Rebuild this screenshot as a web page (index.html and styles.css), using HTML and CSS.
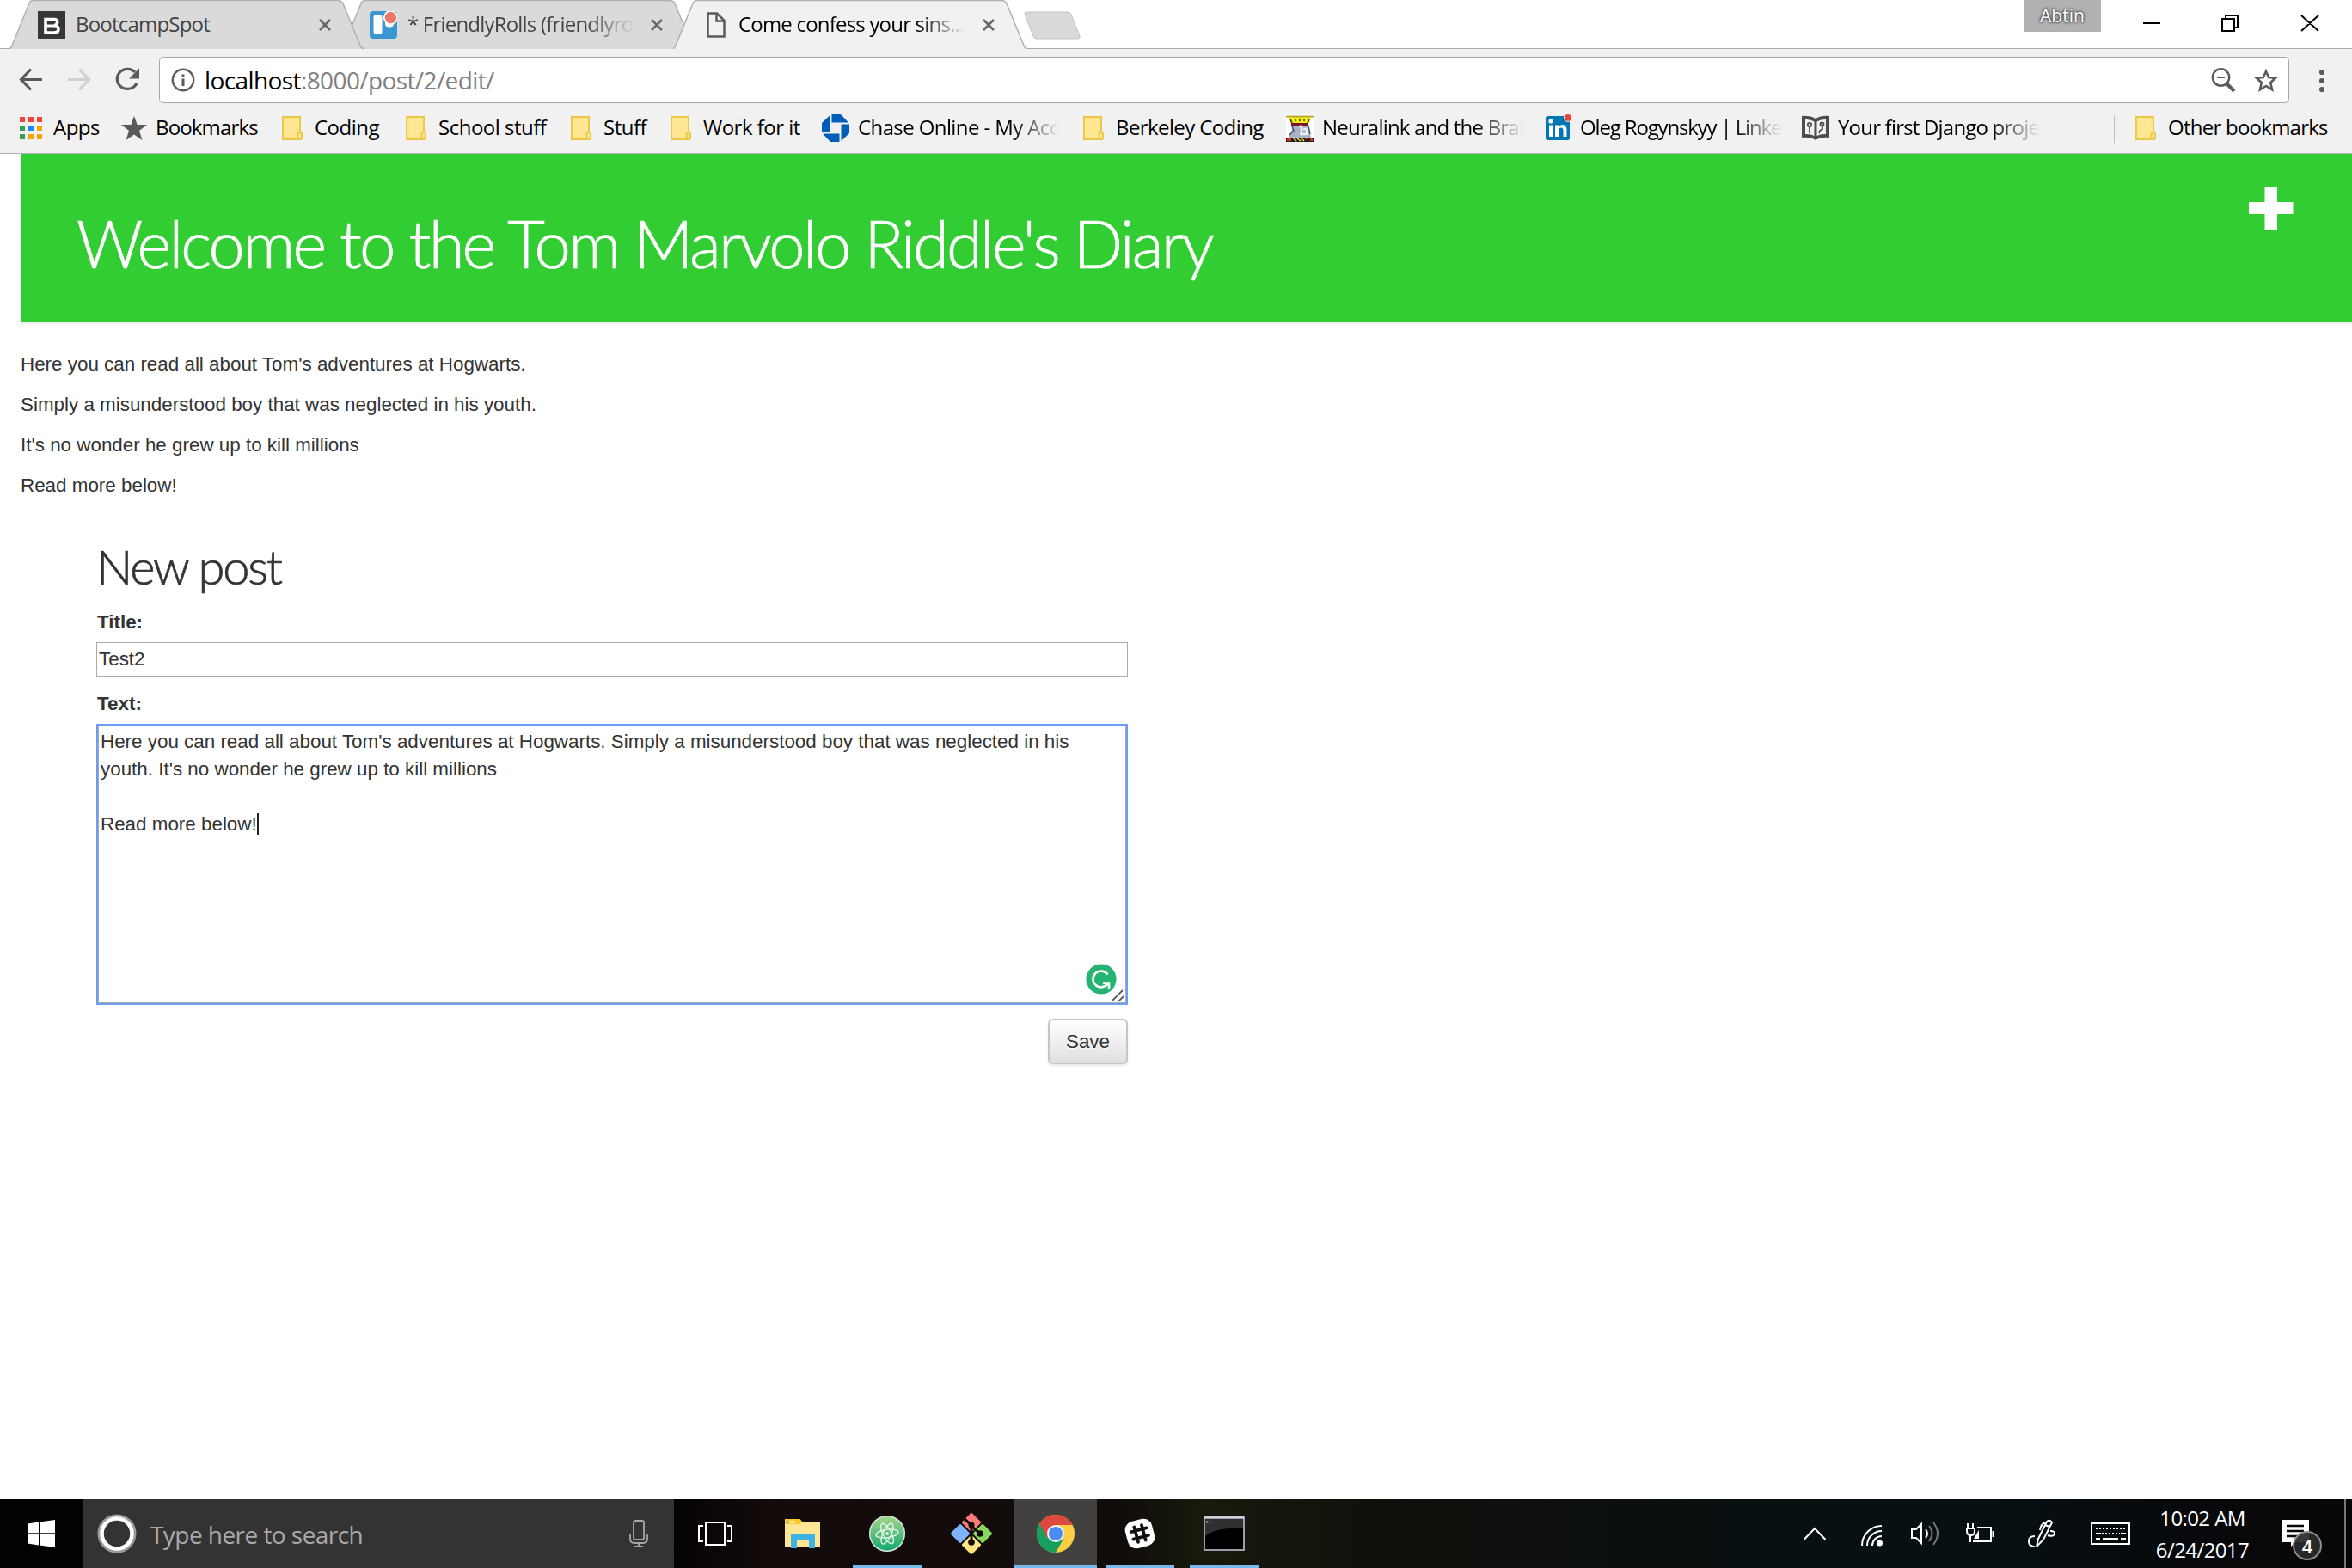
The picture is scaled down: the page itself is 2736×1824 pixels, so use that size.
FILE: index.html
```html
<!DOCTYPE html>
<html lang="en">
<head>
<meta charset="utf-8">
<title>Come confess your sins...</title>
<link rel="stylesheet" href="styles.css">
</head>
<body>
<svg width="0" height="0" class="defs">
  <symbol id="folder" viewBox="0 0 24 28"><path d="M1 1H21V27H1Z" fill="#ffe693" stroke="#ecc846" stroke-width="2"/><rect x="18.500" y="19" width="4.500" height="8" rx="1.500" fill="#ffe693" stroke="#ecc846" stroke-width="2"/></symbol>
  <symbol id="tabshape" viewBox="0 0 412 57"><path d="M0 56.500Q2 56 3 53L23 4Q24 .5 28 .5H382Q386 .5 388 4L408 53Q409 56 412 56.500V57H0Z"/><path class="edge" d="M0 56.500Q2 56 3 53L23 4Q24 .5 28 .5H382Q386 .5 388 4L408 53Q409 56 412 56.500" fill="none"/></symbol>
  <symbol id="cross" viewBox="0 0 14 14"><path d="M1 1L13 13M13 1L1 13" stroke-width="2.600" fill="none"/></symbol>
</svg>

<div class="tabstrip">
  <div class="tab t1"><svg class="shape"><use href="#tabshape"/></svg>
    <svg class="fav" viewBox="0 0 32 32"><rect width="32" height="32" fill="#373737"/><path d="M9 9.500H18.500Q22.700 9.500 22.700 13Q22.700 16 19 16.500Q24 17 24 21Q24 25 18.500 25H9Z" fill="none" stroke="#fff" stroke-width="3.600"/><path d="M9 17H20" stroke="#fff" stroke-width="3"/></svg>
    <span class="tabtitle">BootcampSpot</span><svg class="x"><use href="#cross"/></svg></div>
  <div class="tab t2"><svg class="shape"><use href="#tabshape"/></svg>
    <svg class="fav" viewBox="0 0 32 32"><rect width="32" height="32" rx="4" fill="#3b97d1"/><rect x="4.500" y="4.500" width="10" height="22" rx="2.500" fill="#fff"/><path d="M18 6H28V15Q28 18.500 23 18.500T18 15Z" fill="#fff"/><circle cx="24.500" cy="7.500" r="8.500" fill="#fff"/><circle cx="24.500" cy="7.500" r="6.700" fill="#f07868"/></svg>
    <span class="tabtitle fade">* FriendlyRolls (friendlyro</span><svg class="x"><use href="#cross"/></svg></div>
  <div class="tab t3"><svg class="shape"><use href="#tabshape"/></svg>
    <svg class="doc" viewBox="0 0 22 30"><path d="M1.500 1.500H12L20.500 10V28.500H1.500ZM11.500 2V10.500H20" fill="none" stroke="#5a5a5a" stroke-width="2.500"/></svg>
    <span class="tabtitle fade">Come confess your sins...</span><svg class="x"><use href="#cross"/></svg></div>
  <svg class="newtab" viewBox="0 0 68 34"><path d="M4 1H52Q55 1 56 4L66 29Q67 32 64 32H16Q13 32 12 29L2 4Q1 1 4 1Z" fill="#d9d9d9" stroke="#c4c4c4"/></svg>
  <div class="winbtns">
    <span class="user">Abtin</span>
    <svg viewBox="0 0 292 56" class="winicons"><g fill="none" stroke="#000" stroke-width="2"><path d="M49 27H69M141 22H155V36H141ZM145 22V18H159V32H155M233 18L253 36M253 18L233 36"/></g></svg>
  </div>
</div>

<div class="toolbar">
  <svg class="nav" viewBox="0 0 162 54"><g fill="none" stroke-width="3.200"><path d="M49 26.500H25M36 14.500L24.500 26.500L36 38.500" stroke="#5a5a5a"/><path d="M79 26.500H103M92 14.500L103.500 26.500L92 38.500" stroke="#d0d0d0"/><path d="M157 18A12 11.500 0 1 0 159 31" stroke="#5a5a5a"/></g><path d="M162 13.500V25.500H150Z" fill="#5a5a5a"/></svg>
  <div class="omnibox">
    <svg class="info" viewBox="0 0 28 28"><circle cx="14" cy="14" r="12.200" fill="none" stroke="#5a5a5a" stroke-width="2.400"/><path d="M14 12.500V21M14 7.500V10.300" stroke="#5a5a5a" stroke-width="3"/></svg>
    <span class="url">localhost<span class="path">:8000/post/2/edit/</span></span>
    <svg class="omniicons" viewBox="0 0 80 30"><g fill="none" stroke="#5a5a5a"><circle cx="12.500" cy="12" r="9.700" stroke-width="2.400"/><path d="M8 12H17" stroke-width="2"/><path d="M19 19L28 28" stroke-width="4"/><path d="M65 5L68.200 12L76 12.700L70.200 18L72 26.300L65 22L58 26.300L59.800 18L54 12.700L61.800 12Z" stroke-width="2.600"/></g></svg>
  </div>
  <svg class="dots" viewBox="0 0 8 28"><circle cx="4" cy="4" r="3.100"/><circle cx="4" cy="14" r="3.100"/><circle cx="4" cy="24" r="3.100"/></svg>
</div>

<div class="bookmarks">
  <div class="bm b1"><svg viewBox="0 0 26 26" width="26" height="26"><path fill="#f44336" d="M0 0h6v6H0zM10 0h6v6h-6zM20 0h6v6h-6z"/><path fill="#34a058" d="M0 10h6v6H0zM0 20h6v6H0z"/><path fill="#1a8cff" d="M10 10h6v6h-6z"/><path fill="#f4a508" d="M20 10h6v6h-6zM10 20h6v6h-6zM20 20h6v6h-6z"/></svg><span>Apps</span></div>
  <div class="bm b2"><svg viewBox="0 0 30 28" width="30" height="28"><path d="M15 0L18.700 10H30L21 17L24.500 28L15 21.500L5.500 28L9 17L0 10H11.300Z" fill="#5a5a5a"/></svg><span>Bookmarks</span></div>
  <div class="bm b3"><svg width="24" height="28"><use href="#folder"/></svg><span>Coding</span></div>
  <div class="bm b4"><svg width="24" height="28"><use href="#folder"/></svg><span>School stuff</span></div>
  <div class="bm b5"><svg width="24" height="28"><use href="#folder"/></svg><span>Stuff</span></div>
  <div class="bm b6"><svg width="24" height="28"><use href="#folder"/></svg><span>Work for it</span></div>
  <div class="bm b7 site"><svg viewBox="0 0 32 32" width="32" height="32"><g fill="#005eb8"><path d="M11.500 0H22L31 9.500H11.500Z"/><path d="M32 11.500V22L22.500 31V11.500Z"/><path d="M20.500 32H10L1 22.500H20.500Z"/><path d="M0 20.500V10L9.500 1V20.500Z"/></g></svg><span class="fade">Chase Online - My Acc</span></div>
  <div class="bm b8"><svg width="24" height="28"><use href="#folder"/></svg><span>Berkeley Coding</span></div>
  <div class="bm b9 site"><svg viewBox="0 0 32 32" width="32" height="32"><path fill="#fff" d="M0 0h32v32H0z"/><path d="M2 2H30L26 11H6Z" fill="#f5ee0a"/><path d="M0 2.500H32" stroke="#b5ac3c" stroke-width="2"/><path d="M5 6L7 10M11 5V8M16 5V8M21 5V8M27 6L25 10" stroke="#55521c" stroke-width="1.800" fill="none"/><path d="M6 10H26V13H6Z" fill="#7d1730"/><path d="M8 13H26L29 27H3L6 20Z" fill="#aab2c8"/><path d="M15 14H18V24M20 17H24V23H16" stroke="#e8ecf5" stroke-width="2.500" fill="none"/><path d="M7 14L9 19L4 24M26 14L28 23" stroke="#4b5066" stroke-width="1.500" fill="none"/><path d="M0 27H32V32H0Z" fill="#22221c"/><path d="M1 27H6V31H1ZM22 27H26V29H22ZM28 28H31V31H28Z" fill="#df2a1b"/><path d="M8 27L12 31M12 27L17 31M17 27L21 31" stroke="#e9e23a" stroke-width="1.500"/></svg><span class="fade">Neuralink and the Brai</span></div>
  <div class="bm b10 site"><svg viewBox="0 0 30 32" width="30" height="32"><rect y="2" width="28" height="28" rx="2.500" fill="#0077b5"/><circle cx="6" cy="8" r="2.600" fill="#fff"/><path d="M4 12.500H8V26H4ZM11 12.500H15V14.500Q16.500 12 19.500 12Q24.500 12 24.500 18V26H20.500V19Q20.500 15.500 18 15.500Q15 15.500 15 19V26H11Z" fill="#fff"/><circle cx="26" cy="4" r="5" fill="#f1f1f1"/><circle cx="26" cy="4" r="4" fill="#f44336"/></svg><span class="fade">Oleg Rogynskyy | Linke</span></div>
  <div class="bm b11 site"><svg viewBox="0 0 32 32" width="32" height="32"><path d="M0 2Q9 1 16 5Q23 1 32 2V27Q22 26 16 30Q10 26 0 27Z" fill="#4d4d4f"/><path d="M4 6Q10 5.500 14.500 8.500V25Q10 22.500 4 23ZM28 6Q22 5.500 17.500 8.500V25Q22 22.500 28 23Z" fill="#f1f1f1"/><g fill="none" stroke="#4d4d4f" stroke-width="1.800"><circle cx="9" cy="12" r="2.200"/><path d="M9 14V22M20 22L21 19L24 17V14"/><circle cx="23.500" cy="11.500" r="2"/></g></svg><span class="fade">Your first Django proje</span></div>
  <div class="bm b12"><svg width="24" height="28"><use href="#folder"/></svg><span>Other bookmarks</span></div>
</div>

<main class="page">
  <header class="page-header">
    <h1>Welcome to the Tom Marvolo Riddle's Diary</h1>
    <svg class="plus" viewBox="0 0 52 50"><path d="M18.500 0H33V18H51.500V32H33V50H18.500V32H0V18H18.500Z" fill="#fff"/></svg>
  </header>
  <section class="intro">
    <p>Here you can read all about Tom's adventures at Hogwarts.</p>
    <p>Simply a misunderstood boy that was neglected in his youth.</p>
    <p>It's no wonder he grew up to kill millions</p>
    <p>Read more below!</p>
  </section>
  <section class="form">
    <h2>New post</h2>
    <div class="label">Title:</div>
    <div class="field">Test2</div>
    <div class="label second">Text:</div>
    <div class="area">Here you can read all about Tom's adventures at Hogwarts. Simply a misunderstood boy that was neglected in his<br>youth. It's no wonder he grew up to kill millions<br><br>Read more below!<i class="caret"></i>
      <svg class="grammarly" viewBox="0 0 36 36"><circle cx="18" cy="18" r="17.600" fill="#27b473"/><path d="M25.500 12.500A9.400 9.400 0 1 0 25 24" fill="none" stroke="#fff" stroke-width="2.600"/><path d="M20 21.300H28.300V29H25.700V25.500Q23 23.900 20 23.700Z" fill="#fff"/></svg>
      <svg class="grip" viewBox="0 0 16 16"><path d="M1 14L13 2M8 15L14 9" stroke="#606060" stroke-width="1.800"/></svg>
    </div>
    <div class="actions"><span class="save">Save</span></div>
  </section>
</main>

<footer class="taskbar">
  <div class="start"><svg width="32" height="32" viewBox="0 0 32 32"><path fill="#fff" d="M0 4.500L13 2.600V15.300H0ZM14.200 2.400L32 0V15.300H14.200ZM0 16.500H13V29.400L0 27.500ZM14.200 16.500H32V32L14.200 29.600Z"/></svg></div>
  <div class="search">
    <svg width="46" height="46" viewBox="0 0 46 46"><circle cx="23" cy="23" r="20" fill="none" stroke="#9b9b9b" stroke-width="5"/><circle cx="23" cy="23" r="17.500" fill="none" stroke="#fff" stroke-width="4.500"/></svg>
    <span class="ph">Type here to search</span>
    <svg class="mic" width="22" height="32" viewBox="0 0 22 32"><g fill="none" stroke="#a6a6a6" stroke-width="1.800"><rect x="5" y="1" width="12" height="22" rx="2"/><path d="M1 16V22Q1 27 6 27H16Q21 27 21 22V16M11 27V31M6 31H16"/></g></svg>
  </div>
  <div class="apps">
    <div class="app view"><svg width="42" height="28" viewBox="0 0 42 28"><g fill="none" stroke="#fff" stroke-width="2"><rect x="10" y="1" width="22" height="26"/><path d="M7 5H2V23H7M35 5H40V23H35"/></g></svg></div>
    <div class="app"><svg width="44" height="36" viewBox="0 0 44 36"><path d="M1 1H18L21 4H42V34H1Z" fill="#ffe693"/><path d="M1 1H18L21 4L18 7H1Z" fill="#ffc928"/><rect x="3" y="3.500" width="10" height="2" fill="#fff"/><rect x="3" y="3.500" width="3" height="2" fill="#2f9fe0"/><path d="M8 35V18H36V35H29V25H15V35Z" fill="#3eb1e5"/></svg></div>
    <div class="app run"><svg width="44" height="44" viewBox="0 0 44 44"><defs><linearGradient id="ga" x2="0" y2="1"><stop offset="0" stop-color="#a5d68a"/><stop offset="1" stop-color="#10a86e"/></linearGradient></defs><circle cx="22" cy="22" r="20.300" fill="url(#ga)" stroke="#d8e4dc" stroke-width="1.500"/><g fill="none" stroke="#e6f5e8" stroke-width="1.400"><ellipse cx="22" cy="22" rx="13" ry="4.800" transform="rotate(-8 22 22)"/><ellipse cx="22" cy="22" rx="13" ry="4.800" transform="rotate(62 22 22)"/><ellipse cx="22" cy="22" rx="13" ry="4.800" transform="rotate(115 22 22)"/></g><circle cx="22" cy="22" r="1.800" fill="#fff"/></svg></div>
    <div class="app"><svg width="48" height="48" viewBox="0 0 48 48"><g stroke-width="3" stroke-linejoin="round"><path d="M24 1.500L33.500 11L24 20.500L14.500 11Z" fill="#ff7b7b" stroke="#ff7b7b"/><path d="M11 14.500L20.500 24L11 33.500L1.500 24Z" fill="#80b3ff" stroke="#80b3ff"/><path d="M37 14.500L46.500 24L37 33.500L27.500 24Z" fill="#8cd65c" stroke="#8cd65c"/><path d="M24 27.500L33.500 37L24 46.500L14.500 37Z" fill="#ffe680" stroke="#ffe680"/></g><path d="M16 7L24 14V34M24 15L34 24" stroke="#110c0c" stroke-width="3" fill="none"/><circle cx="24" cy="14" r="3.500" fill="#110c0c"/><circle cx="24" cy="34" r="3.800" fill="#110c0c"/><circle cx="34" cy="24" r="3.800" fill="#110c0c"/></svg></div>
    <div class="app run active"><svg width="44" height="44" viewBox="0 0 44 44"><circle cx="22" cy="22" r="22" fill="#ffce44"/><path d="M22 22L2.900 11A22 22 0 0 0 22 44L31.500 27.500Z" fill="#17a05d"/><path d="M22 12H41.600A22 22 0 0 0 3.200 10.600L12.500 27.500L22 22Z" fill="#dc4a3d"/><circle cx="22" cy="22" r="10" fill="#f4f4f4"/><circle cx="22" cy="22" r="8" fill="#4c8bf5"/></svg></div>
    <div class="app run"><svg width="40" height="40" viewBox="0 0 40 40"><g transform="rotate(-15 20 20)"><rect x="4" y="4" width="32" height="32" rx="10" fill="#fff"/><path d="M15.500 11V29M24.500 11V29M11 15.500H29M11 24.500H29" stroke="#111" stroke-width="3.800" stroke-linecap="round"/></g></svg></div>
    <div class="app run"><svg width="48" height="40" viewBox="0 0 48 40"><rect x="1" y="1" width="46" height="38" fill="#000" stroke="#9d9daa" stroke-width="2"/><path d="M2 3H46V13Q14 13 2 23Z" fill="#303030"/><path d="M1 1.500H47" stroke="#d5d5e2" stroke-width="2.500"/><path d="M4 5V8M7 5L8 8" stroke="#bbb"/></svg></div>
  </div>
  <svg class="tray" width="400" height="80" viewBox="2090 1744 400 80"><g fill="none" stroke="#fff" stroke-width="2"><path d="M2098.500 1791L2111 1778L2123.500 1791"/><path d="M2166 1798A23 23 0 0 1 2189 1775M2172 1798A17 17 0 0 1 2189 1781M2178 1798A11 11 0 0 1 2189 1787"/><path d="M2224 1779H2229L2235 1773V1795L2229 1789H2224Z"/><path d="M2240 1779Q2244 1784 2240 1789"/><path d="M2244 1775Q2251 1784 2244 1793M2249 1771Q2259 1784 2249 1797" stroke="#777"/><path d="M2300 1777H2316V1793H2295M2318.500 1781V1788M2289 1772V1778M2295 1772V1778M2288 1778H2297V1781Q2297 1786 2292.500 1786Q2288 1786 2288 1781ZM2292 1785V1794"/><path d="M2369 1799L2371 1790L2381 1770Q2384 1767 2387 1771L2377 1791L2369 1799M2379 1774L2384 1776M2367 1787Q2360 1787 2360 1793Q2360 1799 2367 1799M2379 1771Q2374 1773 2373 1780M2385 1781Q2391 1781 2390 1785Q2388 1788 2382 1786"/><rect x="2433" y="1772" width="44" height="24"/><path d="M2438 1778H2473M2445 1784H2466" stroke-dasharray="2 2"/><path d="M2438 1784H2444M2467 1784H2473M2438 1790H2443M2446 1790H2464M2467 1790H2473"/></g><circle cx="2186.500" cy="1795" r="3.500" fill="#fff"/><path d="M2302 1780L2296 1790H2302Z" fill="#fff"/></svg>
  <div class="clock"><span>10:02 AM</span><span>6/24/2017</span></div>
  <div class="notif"><svg width="32" height="32" viewBox="0 0 32 32"><path d="M0 0H32V26H16L11 31V26H0Z" fill="#fff"/><path d="M6 7H26M6 13H26M6 19H20" stroke="#08090b" stroke-width="2.400"/></svg><b>4</b></div>
  <div class="desk"></div>
</footer>
</body>
</html>
```
FILE: styles.css
```css
* { box-sizing: border-box; }
body { margin: 0; width: 2736px; height: 1824px; overflow: hidden; display: flex; flex-direction: column; background: #fff; font-family: "Open Sans", "Noto Sans", sans-serif; font-size: 24px; color: #000; }
svg { display: block; flex: none; }
.defs { position: absolute; }
span { white-space: nowrap; }
.fade { overflow: hidden; -webkit-mask-image: linear-gradient(90deg, #000 calc(100% - 56px), transparent); mask-image: linear-gradient(90deg, #000 calc(100% - 56px), transparent); }

.tabstrip { height: 57px; flex: none; display: flex; padding-left: 11px; border-bottom: 1px solid #ababab; }
.tab { position: relative; width: 412px; height: 57px; flex: none; display: flex; align-items: flex-start; padding-left: 33px; color: #444; }
.tab + .tab { margin-left: -26px; }
.t1 { z-index: 2; }
.t3 { z-index: 3; color: #000; padding-left: 38px; }
.shape { position: absolute; left: 0; top: 0; width: 412px; height: 57px; fill: #dadada; stroke: none; }
.edge { stroke: #b0b0b0; stroke-width: 1.5px; }
.t3 .shape { fill: #f1f1f1; }
.fav { position: relative; width: 32px; height: 32px; margin-top: 13px; }
.doc { position: relative; width: 22px; height: 30px; margin: 14px 5px 0 1px; }
.tabtitle { position: relative; width: 264px; height: 40px; margin: 7px 19px 0 12px; line-height: 41px; letter-spacing: -0.8px; }
.t3 .tabtitle { margin-left: 10px; margin-right: 20px; }
.x { position: relative; width: 14px; height: 14px; margin-top: 22px; stroke: #666; }
.newtab { width: 68px; height: 34px; margin: 13px 0 0 -5px; }
.winbtns { display: flex; margin-left: auto; }
.user { width: 90px; height: 37px; background: #b1b1b1; color: #fff; font-size: 21px; line-height: 36px; text-align: center; text-shadow: 0 0 3px #333, 0 0 3px #333; }
.winicons { width: 292px; height: 56px; }

.toolbar { height: 64px; flex: none; display: flex; padding-top: 9px; background: #f1f1f1; }
.nav { width: 162px; height: 54px; }
.omnibox { width: 2478px; height: 54px; margin-left: 23px; display: flex; align-items: center; padding: 0 11px 0 13px; background: #fff; border: 1px solid #a6a6a6; border-radius: 5px; }
.info { width: 28px; height: 28px; }
.url { margin-left: 11px; font-size: 28px; line-height: 50px; padding-bottom: 1px; letter-spacing: -0.6px; }
.path { color: #808080; }
.omniicons { width: 80px; height: 30px; margin-left: auto; }
.dots { width: 8px; height: 28px; margin: 14px 0 0 34px; fill: #5a5a5a; }

.bookmarks { height: 58px; flex: none; display: flex; align-items: center; padding-left: 23px; background: #f1f1f1; border-bottom: 1px solid #b0b0b0; }
.bm { display: flex; align-items: center; flex: none; height: 40px; padding-bottom: 1px; gap: 14px; line-height: 34px; letter-spacing: -0.5px; }
.bm span { margin-top: -3px; }
.bm.site { gap: 10px; }
.bm .fade { width: 235px; }
.b1 { width: 118px; gap: 13px; }
.b2 { width: 187px; gap: 10px; letter-spacing: -0.85px; }
.b3 { width: 144px; }
.b4 { width: 192px; }
.b5 { width: 116px; }
.b6 { width: 176px; }
.b7 { width: 304px; letter-spacing: -0.6px; }
.b8 { width: 236px; letter-spacing: -0.6px; }
.b9 { width: 302px; letter-spacing: -0.8px; }
.b10 { width: 298px; letter-spacing: -1.15px; }
.b11 { width: 363px; letter-spacing: -0.8px; }
.b12 { border-left: 1px solid #bdbdbd; padding-left: 24px; height: 32px; letter-spacing: -0.75px; }

.page { flex: 1; padding-left: 24px; font-family: "Liberation Sans", Arial, sans-serif; font-size: 22.4px; line-height: 32px; color: #333; }
.page-header { height: 198px; display: flex; justify-content: space-between; background: #32cd32; border-bottom: 2px solid #eee; padding: 38px 68px 0 65px; }
h1, h2 { margin: 0; font-family: Lato, sans-serif; font-weight: 300; -webkit-text-stroke: 0.7px currentColor; }
h1 { font-size: 76px; line-height: 131px; letter-spacing: -2.85px; color: #fff; white-space: nowrap; }
.plus { width: 52px; height: 50px; }
.intro { padding-top: 31px; }
.intro p { margin: 0 0 15.1px; }
.form { width: 1288px; padding-left: 88px; }
h2 { margin: 38px 0 8.7px; font-size: 56px; line-height: 80px; letter-spacing: -2.2px; }
.label { margin-left: 1px; font-weight: bold; }
.field { height: 40px; margin-top: 7px; border: 1px solid #a9a9a9; padding: 3px 2px; }
.label.second { margin-top: 16px; }
.area { position: relative; height: 327px; margin-top: 7px; border: 2px solid #6a9ff5; box-shadow: inset 0 0 0 1px #a9a9a9; padding: 3px; white-space: nowrap; }
.caret { display: inline-block; width: 2px; height: 25px; background: #222; vertical-align: -5px; }
.grammarly { position: absolute; right: 11px; bottom: 10px; width: 36px; height: 36px; }
.grip { position: absolute; right: 1px; bottom: 1px; width: 16px; height: 16px; }
.actions { display: flex; justify-content: flex-end; padding-top: 16px; }
.save { width: 93px; height: 53px; border: 2px solid #c5c5c5; border-radius: 6px; background: linear-gradient(#fff, #e0e0e0); text-align: center; line-height: 49px; box-shadow: 0 2px 3px rgba(0, 0, 0, .1); text-shadow: 0 1px 1px #fff; }

.taskbar { height: 80px; flex: none; display: flex; color: #fff; background: linear-gradient(90deg, #030104 0, #050205 780px, #140b0a 900px, #110c0a 1300px, #171a0c 1400px, #10100b 1600px, #081012 2100px, #071013 2300px, #07090c 2550px, #090606 2736px); }
.start { width: 96px; padding: 24px 0 0 32px; }
.search { width: 688px; background: #333; display: flex; align-items: center; padding: 0 30px 0 17px; }
.ph { margin: 0 auto 0 16px; padding-top: 1px; font-size: 28px; color: #a9a9a9; letter-spacing: -0.55px; }
.apps { display: flex; padding-left: 3px; }
.app { width: 98px; height: 80px; display: flex; align-items: center; justify-content: center; position: relative; }
.app.view { padding-right: 8px; }
.app.active { width: 96px; margin: 0 1px; background: #434040; }
.run::after { content: ""; position: absolute; left: 9px; right: 9px; bottom: 0; height: 4px; background: #76b9ed; }
.active::after { left: 0; right: 0; }
.tray { margin-left: auto; }
.clock { width: 144px; display: flex; flex-direction: column; align-items: center; line-height: 37px; padding-top: 3px; letter-spacing: -0.6px; }
.notif { position: relative; width: 93px; padding: 24px 0 0 20px; }
.notif b { position: absolute; left: 33px; top: 37px; width: 34px; height: 34px; border-radius: 50%; border: 2px solid #8c8c8c; background: #2b2b2bee; font-size: 22px; font-weight: 600; line-height: 30px; text-align: center; }
.desk { width: 9px; border-left: 2px solid #777; }
```
